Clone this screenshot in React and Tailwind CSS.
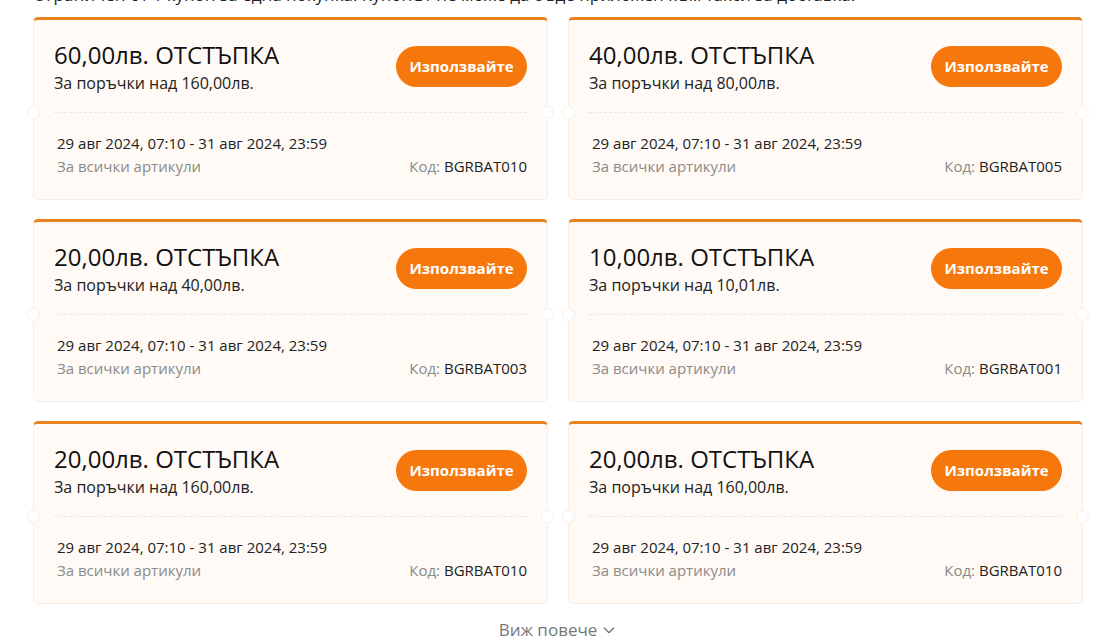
import React from 'react';

const coupons = [
  { amount: '60,00лв.', min: '160,00лв.', code: 'BGRBAT010' },
  { amount: '40,00лв.', min: '80,00лв.', code: 'BGRBAT005' },
  { amount: '20,00лв.', min: '40,00лв.', code: 'BGRBAT003' },
  { amount: '10,00лв.', min: '10,01лв.', code: 'BGRBAT001' },
  { amount: '20,00лв.', min: '160,00лв.', code: 'BGRBAT010' },
  { amount: '20,00лв.', min: '160,00лв.', code: 'BGRBAT010' },
];

const CouponCard = ({ coupon }) => (
  <div className="relative h-[183px] rounded-[5px] border border-[#f6efe7] border-t-[3px] border-t-[#e8811f] bg-[#fffaf5]">
    <div className="flex items-center justify-between px-[20px] pt-[20px]">
      <div>
        <div className="text-[24px] leading-[30px] text-[#111]">{coupon.amount} ОТСТЪПКА</div>
        <div className="mt-[3px] text-[16px] leading-[20px] text-[#222]">За поръчки над {coupon.min}</div>
      </div>
      <button className="h-[41px] w-[131px] rounded-full bg-[#f6780d] text-[15px] font-bold text-white">
        Използвайте
      </button>
    </div>
    <div className="relative mx-[20px] mt-[19px] border-t border-dashed border-[#f0e6d8]">
      <span className="absolute -left-[27px] -top-[7px] h-[13px] w-[13px] rounded-full border border-[#f6efe7] bg-white" />
      <span className="absolute -right-[27px] -top-[7px] h-[13px] w-[13px] rounded-full border border-[#f6efe7] bg-white" />
    </div>
    <div className="px-[20px] pt-[20px] pl-[23px]">
      <div className="text-[15px] leading-[20px] text-[#222]">29 авг 2024, 07:10 - 31 авг 2024, 23:59</div>
      <div className="mt-[3px] flex justify-between text-[15px] leading-[20px] text-[#8a8a8a]">
        <span>За всички артикули</span>
        <span>
          Код: <span className="text-[#222]">{coupon.code}</span>
        </span>
      </div>
    </div>
  </div>
);

const App = () => {
  return (
    <div className="h-[641px] overflow-hidden bg-white pl-[33px] pr-[18px]" style={{ fontFamily: '"Open Sans", "Noto Sans", sans-serif' }}>
      <p className="-mt-[16px] text-[17px] leading-[22px] text-[#222]">
        Ограничен от 1 купон за една покупка. Купонът не може да бъде приложен към такси за доставка.
      </p>
      <div className="mt-[11px] grid grid-cols-2 gap-x-[20px] gap-y-[19px]">
        {coupons.map((c, i) => (
          <CouponCard key={i} coupon={c} />
        ))}
      </div>
      <div className="mt-[13px] flex items-center justify-center gap-[4px] text-[17px] text-[#777]">
        <span>Виж повече</span>
        <svg width="16" height="16" viewBox="0 0 24 24" fill="none" stroke="#777" strokeWidth="2" strokeLinecap="round" strokeLinejoin="round">
          <path d="M5 9l7 7 7-7" />
        </svg>
      </div>
    </div>
  );
};

export default App;
